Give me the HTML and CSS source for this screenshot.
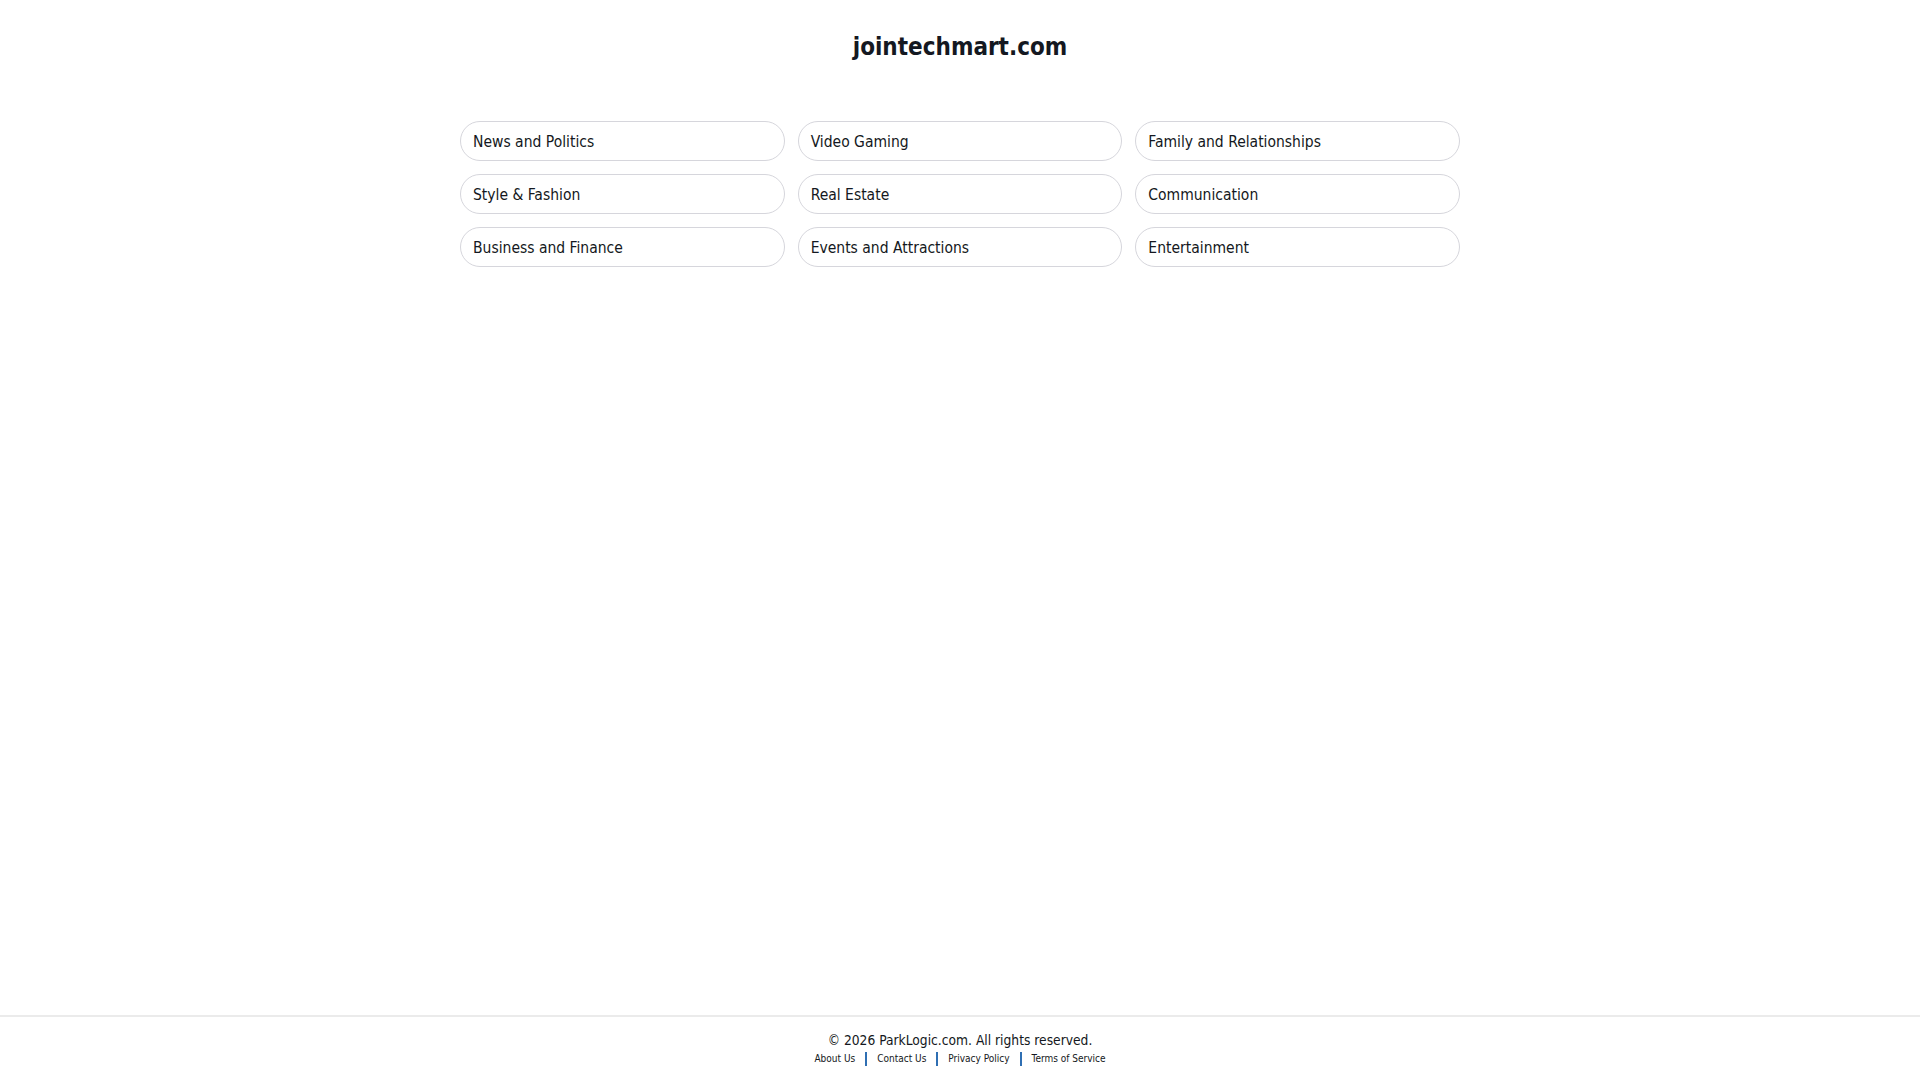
FILE: index.html
```html
<!DOCTYPE html>
<html lang="en">
<head>
<meta charset="utf-8">
<title>jointechmart.com</title>
<link rel="stylesheet" href="styles.css">
</head>
<body>
<div class="page">
  <main class="main">
    <h1 class="title">jointechmart.com</h1>
    <div class="grid">
      <a class="pill" href="#">News and Politics</a>
      <a class="pill" href="#">Video Gaming</a>
      <a class="pill" href="#">Family and Relationships</a>
      <a class="pill" href="#">Style &amp; Fashion</a>
      <a class="pill" href="#">Real Estate</a>
      <a class="pill" href="#">Communication</a>
      <a class="pill" href="#">Business and Finance</a>
      <a class="pill" href="#">Events and Attractions</a>
      <a class="pill" href="#">Entertainment</a>
    </div>
  </main>
  <footer class="footer">
    <div class="copy">© 2026 ParkLogic.com. All rights reserved.</div>
    <nav class="links">
      <a href="#">About Us</a><span class="sep"></span>
      <a href="#">Contact Us</a><span class="sep"></span>
      <a href="#">Privacy Policy</a><span class="sep"></span>
      <a href="#">Terms of Service</a>
    </nav>
  </footer>
</div>
</body>
</html>
```
FILE: styles.css
```css
html, body {
  margin: 0;
  padding: 0;
  background: #ffffff;
}
body {
  font-family: "DejaVu Sans Condensed", "DejaVu Sans", sans-serif;
  color: #141821;
}
.page {
  min-height: 100vh;
  display: flex;
  flex-direction: column;
}
.main {
  flex: 1;
  display: flex;
  flex-direction: column;
  align-items: center;
}
.title {
  margin: 32px 0 0;
  font-size: 24px;
  line-height: 30px;
  font-weight: bold;
  color: #141821;
}
.grid {
  margin-top: 59px;
  width: 1000px;
  display: grid;
  grid-template-columns: repeat(3, 1fr);
  column-gap: 13px;
  row-gap: 13px;
}
.pill {
  display: flex;
  align-items: center;
  height: 40px;
  box-sizing: border-box;
  padding: 2px 12px 0;
  border: 1px solid #d6d6dc;
  border-radius: 20px;
  font-size: 15.5px;
  color: #141821;
  text-decoration: none;
}
.footer {
  border-top: 2px solid #ebebeb;
  height: 65px;
  box-sizing: border-box;
  display: flex;
  flex-direction: column;
  align-items: center;
  padding-top: 14px;
}
.copy {
  font-size: 13.7px;
  line-height: 18px;
  color: #141821;
}
.links {
  display: flex;
  align-items: center;
  margin-top: 3px;
  font-size: 10px;
  line-height: 14px;
}
.links a {
  color: #141821;
  text-decoration: none;
}
.sep {
  width: 2px;
  height: 14px;
  background: #2f6fb3;
  margin: 0 10px;
}
```
